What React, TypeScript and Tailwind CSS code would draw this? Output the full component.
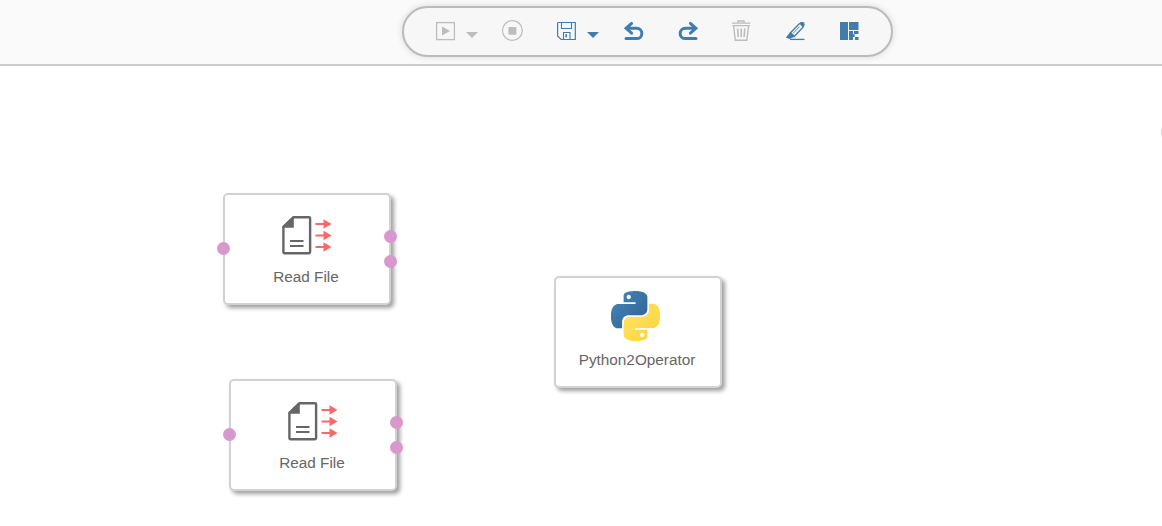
import type { ReactNode } from "react";

function Icon({ className = "", children }: { className?: string; children: ReactNode }) {
  return (
    <svg width="22" height="22" viewBox="0 0 22 22" fill="none" className={`shrink-0 ${className}`}>
      {children}
    </svg>
  );
}

function Caret({ className = "" }: { className?: string }) {
  return (
    <svg width="12" height="6" viewBox="0 0 12 6" className={`mt-[12px] shrink-0 ${className}`}>
      <path d="M0 0H12L6 6Z" fill="currentColor" />
    </svg>
  );
}

function Toolbar() {
  return (
    <div className="flex h-[51px] w-[491px] items-start rounded-full border-2 border-[#bbbbbb] bg-[#f7f7f7] pt-[12px] pl-[30px] text-[#427cac] shadow-[0_0_7px_rgba(0,0,0,0.14)]">
      <Icon className="text-[#bdbdbd]">
        <rect x="2.6" y="2.6" width="17.8" height="17" stroke="currentColor" strokeWidth="1.3" />
        <path d="M8 6.5L16 11L8 15.5Z" fill="currentColor" />
      </Icon>
      <Caret className="ml-[10px] text-[#bdbdbd]" />
      <Icon className="ml-[23px] text-[#bdbdbd]">
        <circle cx="11.4" cy="10.5" r="9.9" stroke="currentColor" strokeWidth="1.2" />
        <rect x="7.4" y="7" width="8" height="7.7" rx="1" fill="currentColor" />
      </Icon>
      <Icon className="ml-[33px]">
        <path d="M2.3 2.5H19.3V19.5H5.2L1.6 16V3.2Q1.6 2.5 2.3 2.5Z" stroke="currentColor" strokeWidth="1.2" />
        <path d="M5.5 2.5V8.5H15.5V2.5M7.5 19.5V12.5H14V19.5" stroke="currentColor" strokeWidth="1.1" />
        <path d="M9.3 14.2H11V17.2H9.3Z" fill="currentColor" />
      </Icon>
      <Caret className="ml-[9px]" />
      <Icon className="ml-[24px]">
        <path
          d="M8.6 3.4L3.1 8.3L8.6 13.2M3.3 8.3H13.7A5.15 5.15 0 0 1 13.7 18.6H3"
          stroke="currentColor"
          strokeWidth="3"
          strokeLinecap="round"
        />
      </Icon>
      <Icon className="ml-[32px]">
        <path
          d="M13.4 3.4L18.9 8.3L13.4 13.2M18.7 8.3H8.3A5.15 5.15 0 0 0 8.3 18.6H19"
          stroke="currentColor"
          strokeWidth="3"
          strokeLinecap="round"
        />
      </Icon>
      <Icon className="ml-[31px] text-[#bdbdbd]">
        <path d="M2 3.1H20.3M8 2.8V1H14V2.8M3.6 6L5.3 20.2H16.8L18.6 6M2.4 5.6H20" stroke="currentColor" strokeWidth="1.4" />
        <path d="M7.6 8.5L8.3 17M11.2 8.5V17M14.8 8.5L14.1 17" stroke="currentColor" strokeWidth="1.6" />
      </Icon>
      <Icon className="ml-[32px]">
        <path d="M17.6 2.6L20 4.6L18.8 7.4L10.2 16.6L6.3 12.9L15 4Z" stroke="currentColor" strokeWidth="1.4" />
        <path d="M1.9 17.6L6.5 11.8L11.3 16.4L5.2 18.9Z" fill="currentColor" />
        <path d="M15.2 3.6L19 7.4L20.6 2.4L17.5 2Z" fill="currentColor" />
        <path d="M9 13.4L15.6 6.6" stroke="currentColor" strokeWidth=".9" />
        <path d="M6 19.4H20.5" stroke="currentColor" strokeWidth="1.3" />
      </Icon>
      <Icon className="ml-[32px]">
        <path
          d="M2 2H10V20H2ZM11 2H20.5V10H11ZM11 11H15V20H11ZM16 11H20.5V14H16ZM15 14.3H16.7V17H15ZM17 17H20.5V20H17Z"
          fill="currentColor"
        />
      </Icon>
    </div>
  );
}

function FileIcon() {
  return (
    <svg width="50" height="39" viewBox="0 0 50 39" fill="none">
      <path d="M11.5 1.3H27Q28.1 1.3 28.1 2.4V36.1Q28.1 37.2 27 37.2H2.5Q1.4 37.2 1.4 36.1V10.8Z" stroke="#666666" strokeWidth="2.4" />
      <path d="M11.8 .8V11.8H.8V10.5L10.5 .8Z" fill="#666666" />
      <path d="M8 25.1H21.5M8 29.9H21.5" stroke="#666666" strokeWidth="2" />
      <path d="M33.5 8H44M33.5 19.5H44M33.5 31H44" stroke="#fa6969" strokeWidth="1.9" />
      <path d="M41.5 3.3L49.5 8L41.5 12.7ZM41.5 14.8L49.5 19.5L41.5 24.2ZM41.5 26.3L49.5 31L41.5 35.7Z" fill="#fa6969" />
    </svg>
  );
}

const snake =
  "M14.25.18l.9.2.73.26.59.3.45.32.34.34.25.34.16.33.1.3.04.26.02.2-.01.13V8.5l-.05.63-.13.55-.21.46-.26.38-.3.31-.33.25-.35.19-.35.14-.33.1-.3.07-.26.04-.21.02H8.77l-.69.05-.59.14-.5.22-.41.27-.33.32-.27.35-.2.36-.15.37-.1.35-.07.32-.04.27-.02.21v3.06H3.17l-.21-.03-.28-.07-.32-.12-.35-.18-.36-.26-.36-.36-.35-.46-.32-.59-.28-.73-.21-.88-.14-1.05-.05-1.23.06-1.22.16-1.04.24-.87.32-.71.36-.57.4-.44.42-.33.42-.24.4-.16.36-.1.32-.05.24-.01h.16l.06.01h8.16v-.83H6.18l-.01-2.75-.02-.37.05-.34.11-.31.17-.28.25-.26.31-.23.38-.2.44-.18.51-.15.58-.12.64-.1.71-.06.77-.04.84-.02 1.27.05zm-6.3 1.98l-.23.33-.08.41.08.41.23.34.33.22.41.09.41-.09.33-.22.23-.34.08-.41-.08-.41-.23-.33-.33-.22-.41-.09-.41.09z";

function PythonIcon() {
  return (
    <svg width="49" height="50" viewBox="0 0 24 24" preserveAspectRatio="none">
      <defs>
        <linearGradient id="blue" x1="0" y1="0" x2="1" y2="1">
          <stop offset="0" stopColor="#4588bd" />
          <stop offset="1" stopColor="#305f8d" />
        </linearGradient>
        <linearGradient id="yellow" x1="1" y1="1" x2="0" y2="0">
          <stop offset="0" stopColor="#ffe568" />
          <stop offset="1" stopColor="#ffd23a" />
        </linearGradient>
      </defs>
      <path d={snake} fill="url(#blue)" />
      <path d={snake} fill="url(#yellow)" transform="rotate(180 12 12)" />
    </svg>
  );
}

function Port({ className }: { className: string }) {
  return <span className={`absolute size-[13px] rounded-full bg-[#d898cd] ${className}`} />;
}

function Node({ label, className, children }: { label: string; className: string; children: ReactNode }) {
  return (
    <div className={`absolute flex h-[112px] w-[168px] flex-col items-center rounded-[5px] border-2 border-[#d2d2d2] bg-white shadow-[3px_3px_4px_rgba(0,0,0,0.38)] ${className}`}>
      {children}
      <span className="absolute top-[72px] right-[2px] left-0 text-center text-[15.3px] leading-5 text-[#666666]">{label}</span>
    </div>
  );
}

function ReadFileNode({ className }: { className: string }) {
  return (
    <Node label="Read File" className={className}>
      <div className="mt-[21px]">
        <FileIcon />
      </div>
      <Port className="top-[47px] left-[-8px]" />
      <Port className="top-[35px] right-[-8px]" />
      <Port className="top-[60px] right-[-8px]" />
    </Node>
  );
}

export default function App() {
  return (
    <div className="flex h-[526px] w-[1162px] flex-col overflow-hidden bg-white font-['Liberation_Sans',sans-serif]">
      <header className="flex h-[66px] shrink-0 items-start border-b-2 border-[#cccccc] bg-[#fafafa] pt-[6px] pl-[402px]">
        <Toolbar />
      </header>
      <main className="relative flex-1 overflow-hidden">
        <ReadFileNode className="top-[127px] left-[223px]" />
        <ReadFileNode className="top-[313px] left-[229px]" />
        <Node label="Python2Operator" className="top-[210px] left-[554px]">
          <div className="mt-[13px] -ml-[5px]">
            <PythonIcon />
          </div>
        </Node>
        <span className="absolute top-[55px] left-[1160.5px] size-[22px] rounded-full bg-[#d5d5d5]" />
      </main>
    </div>
  );
}
